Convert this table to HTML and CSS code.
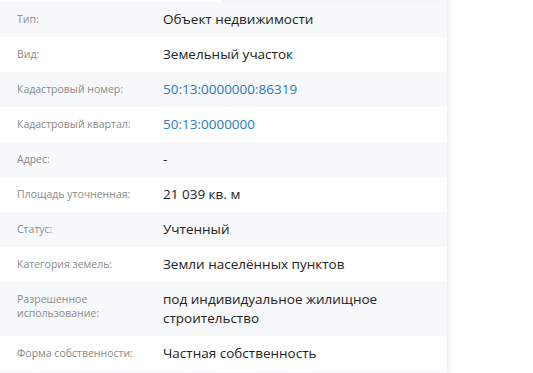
FILE: index.html
```html
<!DOCTYPE html>
<html lang="ru">
<head>
<meta charset="utf-8">
<link rel="stylesheet" href="styles.css">
</head>
<body>
<div class="panel">
  <div class="topstrip"><div class="ts-left"></div><div class="ts-right"></div></div>
  <div class="row alt"><div class="label">Тип:</div><div class="value">Объект недвижимости</div></div>
  <div class="row"><div class="label">Вид:</div><div class="value">Земельный участок</div></div>
  <div class="row alt"><div class="label">Кадастровый номер:</div><div class="value link">50:13:0000000:86319</div></div>
  <div class="row"><div class="label">Кадастровый квартал:</div><div class="value link">50:13:0000000</div></div>
  <div class="row alt"><div class="label">Адрес:</div><div class="value">-</div></div>
  <div class="row"><div class="label">Площадь уточненная:</div><div class="value">21 039 кв. м</div></div>
  <div class="row alt"><div class="label">Статус:</div><div class="value">Учтенный</div></div>
  <div class="row"><div class="label">Категория земель:</div><div class="value">Земли населённых пунктов</div></div>
  <div class="row alt"><div class="label">Разрешенное использование:</div><div class="value">под индивидуальное жилищное строительство</div></div>
  <div class="row"><div class="label">Форма собственности:</div><div class="value">Частная собственность</div></div>
  <div class="endstrip"></div>
</div>
</body>
</html>
```
FILE: styles.css
```css
html, body {
  margin: 0;
  padding: 0;
  background: #ffffff;
  overflow: hidden;
}
.panel {
  width: 447px;
  background: #ffffff;
  box-shadow: 2px 0 4px rgba(0,0,0,0.08);
  font-family: "Open Sans", "Noto Sans", sans-serif;
}
.topstrip {
  display: flex;
  height: 2px;
}
.ts-left { width: 222px; background: #ffffff; }
.ts-right { flex: 1; background: #f5f6f8; }
.row {
  display: flex;
  align-items: flex-start;
  padding: 8px 0 8px 17px;
  min-height: 19px;
}
.row.alt { background: #f7f8fa; }
.endstrip {
  height: 3px;
  background: #f7f8fa;
}
.label {
  width: 146px;
  flex: none;
  font-size: 10.5px;
  line-height: 14px;
  color: #8a8a8a;
  padding-top: 2px;
  padding-right: 20px;
  box-sizing: border-box;
}
.value {
  flex: 1;
  font-size: 13.5px;
  line-height: 19px;
  color: #222222;
  padding-right: 40px;
}
.value.link { color: #2b7bb8; }
```
